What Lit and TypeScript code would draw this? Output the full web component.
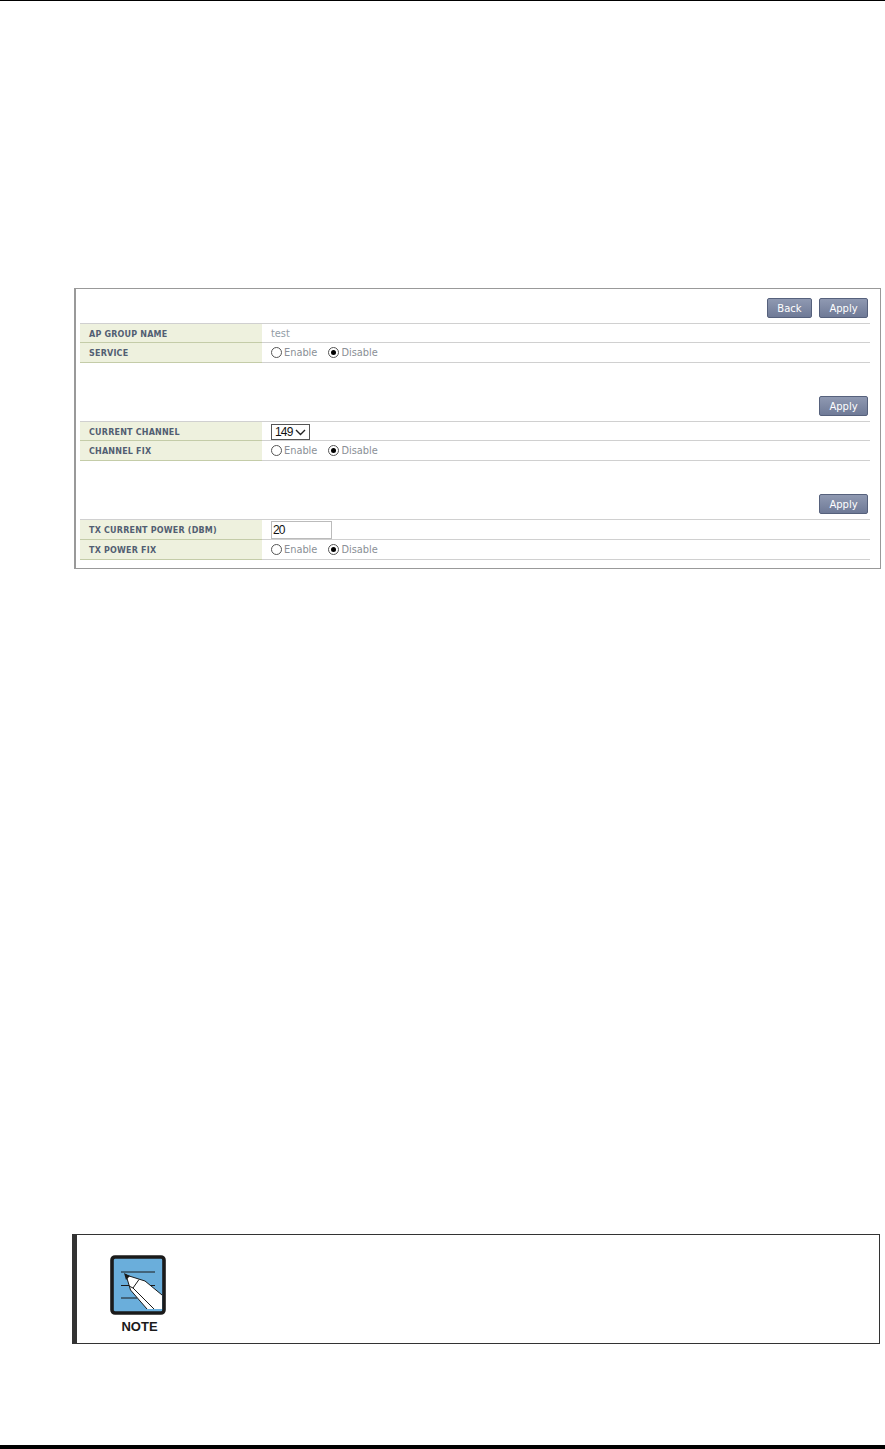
import { LitElement, html, css } from "lit";
import { customElement } from "lit/decorators.js";

const radios = html`
    <span class="radios">
        <span class="radio"></span><span class="opt">Enable</span>
        <span class="radio on"></span><span class="opt">Disable</span>
    </span>
`;

const noteIcon = html`
    <svg class="note-icon" width="56" height="60" viewBox="0 0 56 60">
        <rect x="2" y="2" width="52" height="56" rx="3" fill="#6aaedb" stroke="#1a1a1a" stroke-width="3.6" />
        <path d="M11 17H45M11 30.5H45M11 43H27" stroke="#1a1a1a" stroke-width="1" fill="none" />
        <path d="M16 20L35 26L52 40V54H37L20.5 35Z" fill="#fff" />
        <path d="M16 20L35 26L52 40M16 20L20.5 35L37 54" stroke="#1a1a1a" stroke-width="1" fill="none" />
        <path d="M29 24.5L23 33L19 31M23 33L44 54" stroke="#1a1a1a" stroke-width="1" fill="none" />
        <path d="M14 18L20 21L16 25Z" fill="#1a1a1a" />
    </svg>
`;

@customElement("app-root")
export class AppRoot extends LitElement {
    static styles = css`
        :host {
            display: flex;
            flex-direction: column;
            height: 1449px;
            background: #fff;
            font-family: "DejaVu Sans", sans-serif;
        }
        .top-rule {
            height: 1px;
            background: #000;
        }
        .panel {
            margin: 287px 4px 0 74px;
            height: 281px;
            box-sizing: border-box;
            border: 1px solid #999;
            border-left-width: 2px;
            padding: 0 10px 0 4px;
        }
        .section + .section {
            margin-top: 33px;
        }
        .toolbar {
            display: flex;
            justify-content: flex-end;
            gap: 7px;
            padding: 9px 2px 5px 0;
        }
        .section + .section .toolbar {
            padding-top: 0;
        }
        button {
            height: 20px;
            width: 49px;
            padding: 0;
            border: 1px solid #56617c;
            border-radius: 2px;
            background: linear-gradient(#8f99b2, #6f7a97);
            color: #fff;
            font: 10px "DejaVu Sans", sans-serif;
        }
        button.back {
            width: 45px;
        }
        .rows {
            display: grid;
            grid-template-columns: 182px 1fr;
            border-top: 1px solid #d0d0d0;
        }
        .label,
        .value {
            box-sizing: border-box;
            height: 19px;
            display: flex;
            align-items: center;
            border-bottom: 1px solid #d0d0d0;
        }
        .tall {
            height: 20px;
        }
        .label {
            background: #eef1de;
            border-color: #c4cca8;
            padding: 2px 0 0 9px;
            color: #525e72;
            font-size: 8px;
            font-weight: bold;
            letter-spacing: 0.2px;
        }
        .value {
            padding-left: 9px;
            color: #929da6;
            font-size: 9.8px;
        }
        .radios {
            display: flex;
            align-items: center;
        }
        .radio {
            width: 11px;
            height: 11px;
            box-sizing: border-box;
            border: 1px solid #555;
            border-radius: 50%;
            background: #fff;
            margin-right: 2px;
            position: relative;
        }
        .radio.on::after {
            content: "";
            position: absolute;
            inset: 2px;
            border-radius: 50%;
            background: #000;
        }
        .opt {
            margin-right: 11px;
            color: #8a8f96;
        }
        select {
            appearance: none;
            width: 39px;
            height: 16px;
            box-sizing: border-box;
            border: 1px solid #555;
            border-radius: 0;
            background: #fff;
            padding: 0 0 0 3px;
            color: #111;
            font: 12px "Liberation Sans", sans-serif;
            letter-spacing: -0.8px;
        }
        .select-wrap {
            position: relative;
            display: flex;
            margin-top: 1px;
        }
        .chevron {
            position: absolute;
            right: 4px;
            top: 5px;
            pointer-events: none;
        }
        input {
            width: 61px;
            height: 18px;
            box-sizing: border-box;
            border: 1px solid #bbb;
            padding: 0 0 0 1px;
            color: #111;
            font: 12px "Liberation Sans", sans-serif;
            letter-spacing: -0.8px;
        }
        .note {
            margin: 665px 5px 0 72px;
            height: 110px;
            box-sizing: border-box;
            border: 1px solid #333;
            border-left-width: 5px;
            display: flex;
            flex-direction: column;
            align-items: flex-start;
            padding: 20px 0 0 33px;
        }
        .note-icon {
            display: block;
        }
        .note-text {
            width: 59px;
            margin-top: 4px;
            text-align: center;
            color: #1a1a1a;
            font: bold 13px "Liberation Sans", sans-serif;
        }
        .bottom-rule {
            margin-top: auto;
            height: 4px;
            background: #000;
        }
    `;

    private row(name: string, control: unknown, tall = false) {
        const cls = tall ? "tall" : "";
        return html`
            <div class="label ${cls}">${name}</div>
            <div class="value ${cls}">${control}</div>
        `;
    }

    render() {
        const channel = html`
            <span class="select-wrap">
                <select><option>149</option></select>
                <svg class="chevron" width="11" height="7" viewBox="0 0 11 7">
                    <path d="M1 1L5.5 5.5L10 1" fill="none" stroke="#222" stroke-width="1.4" />
                </svg>
            </span>
        `;
        return html`
            <div class="top-rule"></div>
            <div class="panel">
                <div class="section">
                    <div class="toolbar">
                        <button class="back">Back</button>
                        <button>Apply</button>
                    </div>
                    <div class="rows">
                        ${this.row("AP GROUP NAME", "test")} ${this.row("SERVICE", radios, true)}
                    </div>
                </div>
                <div class="section">
                    <div class="toolbar"><button>Apply</button></div>
                    <div class="rows">
                        ${this.row("CURRENT CHANNEL", channel)} ${this.row("CHANNEL FIX", radios, true)}
                    </div>
                </div>
                <div class="section">
                    <div class="toolbar"><button>Apply</button></div>
                    <div class="rows">
                        ${this.row("TX CURRENT POWER (DBM)", html`<input value="20" />`, true)}
                        ${this.row("TX POWER FIX", radios, true)}
                    </div>
                </div>
            </div>
            <div class="note">
                ${noteIcon}
                <div class="note-text">NOTE</div>
            </div>
            <div class="bottom-rule"></div>
        `;
    }
}
